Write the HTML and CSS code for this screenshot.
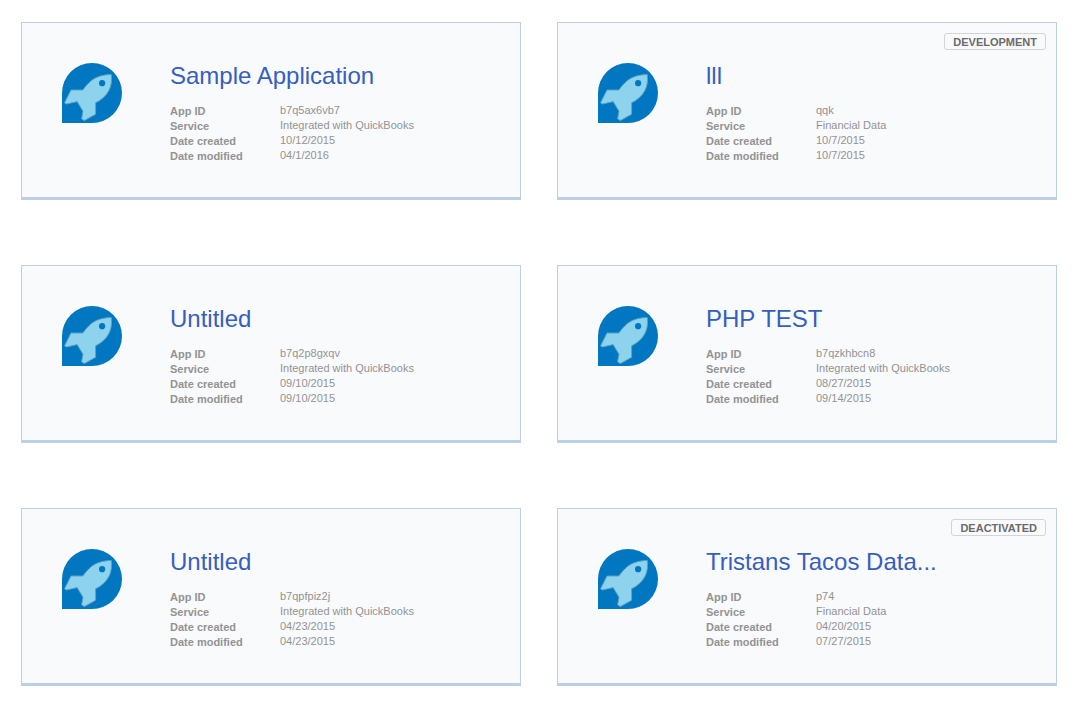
FILE: index.html
```html
<!DOCTYPE html>
<html lang="en">
<head>
<meta charset="utf-8">
<meta name="viewport" content="width=device-width, initial-scale=1">
<title>My Apps</title>
<link rel="stylesheet" href="styles.css">
</head>
<body>
<svg class="sprite" aria-hidden="true">
  <symbol id="rocket" viewBox="0 0 60 60">
    <path fill="#0077c0" d="M0 60V30A30 30 0 1 1 30 60Z"/>
    <path fill="#8dd3ee" stroke="#5da3c4" stroke-width="1" stroke-linejoin="round" d="M2.6 39.8L9 27H20.8C25 21.3 28.5 17.6 33 15.2C38 12.6 43.5 11.6 49.2 11.5C49.9 17 49.5 22.5 47 27.2C44.2 32.8 39.3 37 33.6 39.8V51.3L22.3 57.6L19.6 55.8L21 48.3L15.2 38.6L4.4 41Z"/>
    <circle fill="#0077c0" cx="40.1" cy="20.2" r="3.1"/>
  </symbol>
</svg>
<main class="apps">
  <article class="card">
    <svg class="logo" aria-hidden="true"><use href="#rocket"/></svg>
    <div class="info">
      <h2 class="title"><a href="#">Sample Application</a></h2>
      <dl class="details">
        <dt>App ID</dt><dd>b7q5ax6vb7</dd>
        <dt>Service</dt><dd>Integrated with QuickBooks</dd>
        <dt>Date created</dt><dd>10/12/2015</dd>
        <dt>Date modified</dt><dd>04/1/2016</dd>
      </dl>
    </div>
  </article>
  <article class="card">
    <span class="status">DEVELOPMENT</span>
    <svg class="logo" aria-hidden="true"><use href="#rocket"/></svg>
    <div class="info">
      <h2 class="title"><a href="#">lll</a></h2>
      <dl class="details">
        <dt>App ID</dt><dd>qqk</dd>
        <dt>Service</dt><dd>Financial Data</dd>
        <dt>Date created</dt><dd>10/7/2015</dd>
        <dt>Date modified</dt><dd>10/7/2015</dd>
      </dl>
    </div>
  </article>
  <article class="card">
    <svg class="logo" aria-hidden="true"><use href="#rocket"/></svg>
    <div class="info">
      <h2 class="title"><a href="#">Untitled</a></h2>
      <dl class="details">
        <dt>App ID</dt><dd>b7q2p8gxqv</dd>
        <dt>Service</dt><dd>Integrated with QuickBooks</dd>
        <dt>Date created</dt><dd>09/10/2015</dd>
        <dt>Date modified</dt><dd>09/10/2015</dd>
      </dl>
    </div>
  </article>
  <article class="card">
    <svg class="logo" aria-hidden="true"><use href="#rocket"/></svg>
    <div class="info">
      <h2 class="title"><a href="#">PHP TEST</a></h2>
      <dl class="details">
        <dt>App ID</dt><dd>b7qzkhbcn8</dd>
        <dt>Service</dt><dd>Integrated with QuickBooks</dd>
        <dt>Date created</dt><dd>08/27/2015</dd>
        <dt>Date modified</dt><dd>09/14/2015</dd>
      </dl>
    </div>
  </article>
  <article class="card">
    <svg class="logo" aria-hidden="true"><use href="#rocket"/></svg>
    <div class="info">
      <h2 class="title"><a href="#">Untitled</a></h2>
      <dl class="details">
        <dt>App ID</dt><dd>b7qpfpiz2j</dd>
        <dt>Service</dt><dd>Integrated with QuickBooks</dd>
        <dt>Date created</dt><dd>04/23/2015</dd>
        <dt>Date modified</dt><dd>04/23/2015</dd>
      </dl>
    </div>
  </article>
  <article class="card">
    <span class="status">DEACTIVATED</span>
    <svg class="logo" aria-hidden="true"><use href="#rocket"/></svg>
    <div class="info">
      <h2 class="title"><a href="#">Tristans Tacos Data...</a></h2>
      <dl class="details">
        <dt>App ID</dt><dd>p74</dd>
        <dt>Service</dt><dd>Financial Data</dd>
        <dt>Date created</dt><dd>04/20/2015</dd>
        <dt>Date modified</dt><dd>07/27/2015</dd>
      </dl>
    </div>
  </article>
</main>
</body>
</html>
```
FILE: styles.css
```css
* {
  box-sizing: border-box;
}

body {
  margin: 0;
  background: #fff;
  font-family: "Liberation Sans", Arial, sans-serif;
}

.sprite {
  display: none;
}

.apps {
  display: grid;
  grid-template-columns: 1fr 1fr;
  gap: 65px 36px;
  padding: 22px 29px 24px 21px;
}

.card {
  position: relative;
  display: flex;
  align-items: flex-start;
  gap: 48px;
  padding: 40px 40px 34px;
  border: 1px solid #bdcfe4;
  border-bottom-width: 3px;
  background: #f9fafc;
}

.logo {
  flex: none;
  width: 60px;
  height: 60px;
}

.info {
  flex: 1;
  min-width: 0;
}

.title {
  margin: 0 0 14px;
  font-size: 24px;
  font-weight: 400;
  line-height: 26px;
}

.title a {
  color: #365ebf;
  text-decoration: none;
}

.details {
  display: grid;
  grid-template-columns: 110px 1fr;
  margin: 0;
  color: #939393;
  font-size: 11px;
  line-height: 15px;
}

.details dt {
  padding-top: 1px;
  font-weight: 700;
  line-height: 14px;
}

.details dd {
  margin: 0;
}

.status {
  position: absolute;
  top: 10px;
  right: 10px;
  padding: 1px 8px 0;
  border: 1px solid #d4d4d6;
  border-radius: 3px;
  color: #6b6b6b;
  font-size: 11px;
  font-weight: 700;
  line-height: 14px;
}
```
